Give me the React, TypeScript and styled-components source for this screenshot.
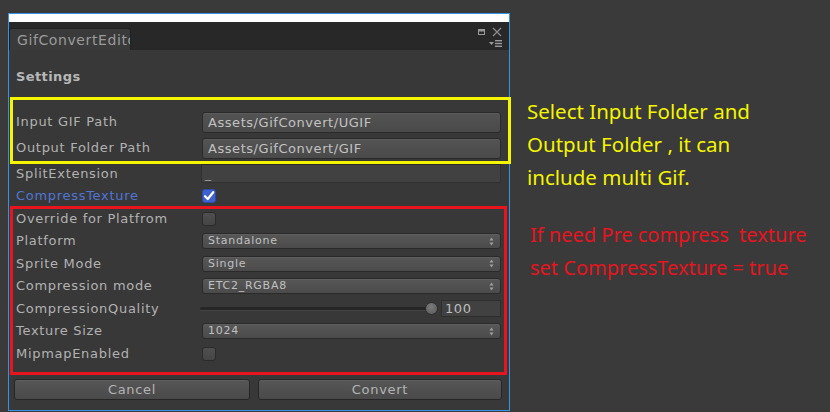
import React from "react";
import styled, { createGlobalStyle, css } from "styled-components";

const GlobalStyle = createGlobalStyle`
  html, body { margin: 0; padding: 0; background: #3a3a3a; }
  body { width: 830px; height: 412px; overflow: hidden; }
  * { box-sizing: border-box; }
`;

const Page = styled.div`
  display: flex;
  align-items: flex-start;
  height: 412px;
  padding: 13px 0 0 8px;
`;

const Window = styled.div`
  width: 502px;
  height: 398px;
  border: 1px solid #3592e6;
  background: #383838;
  display: flex;
  flex-direction: column;
`;

const TitleStrip = styled.div`
  height: 8px;
  background: #ffffff;
`;

const TabBar = styled.div`
  height: 28px;
  background: #282828;
  display: flex;
  align-items: flex-end;
`;

const Tab = styled.div`
  width: 122px;
  height: 22px;
  background: #3a3a3a;
  border: 1px solid #222;
  border-bottom: none;
  border-radius: 3px 3px 0 0;
  padding: 2px 0 0 7px;
  overflow: hidden;
  white-space: nowrap;
  font: 14px/18px "DejaVu Sans", sans-serif;
  letter-spacing: 0.6px;
  color: #9a9a9a;
`;

const WindowControls = styled.div`
  margin-left: auto;
  align-self: stretch;
  display: flex;
  flex-direction: column;
  align-items: flex-end;
  padding: 5px 7px 0 0;
  gap: 3px;
`;

const ControlRow = styled.div`
  display: flex;
  align-items: center;
  gap: 7px;
`;

const Content = styled.div`
  flex: 1;
  display: flex;
  flex-direction: column;
  padding: 19px 8px 0 7px;
`;

const Heading = styled.div`
  font: bold 13px/16px "DejaVu Sans", sans-serif;
  letter-spacing: 0.4px;
  color: #b8b8b8;
  margin-bottom: 24px;
`;

const Group = styled.div<{ $color: string; $inset: string; $after?: number }>`
  position: relative;
  display: flex;
  flex-direction: column;
  margin-bottom: ${(p) => p.$after ?? 0}px;
  &::before {
    content: "";
    position: absolute;
    inset: ${(p) => p.$inset};
    border: 3px solid ${(p) => p.$color};
    pointer-events: none;
  }
`;

const Row = styled.div<{ $h: number }>`
  display: grid;
  grid-template-columns: 186px 1fr;
  align-items: center;
  height: ${(p) => p.$h}px;
`;

const Label = styled.div<{ $accent?: boolean }>`
  font: 13px/16px "DejaVu Sans", sans-serif;
  letter-spacing: 0.7px;
  color: ${(p) => (p.$accent ? "#4f76d6" : "#b2b2b2")};
  white-space: nowrap;
`;

const PathField = styled.div`
  height: 21px;
  border: 1px solid #2a2a2a;
  border-radius: 3px;
  background: linear-gradient(#535353, #4a4a4a);
  box-shadow: inset 0 1px 0 rgba(255, 255, 255, 0.05);
  padding-left: 5px;
  font: 13px/19px "DejaVu Sans", sans-serif;
  letter-spacing: 0.55px;
  color: #c2c2c2;
`;

const TextField = styled.div`
  height: 19px;
  margin-left: -1px;
  border: 1px solid #303030;
  border-top-color: #2a2a2a;
  background: #414141;
  padding: 0 0 0 3px;
  font: 12px/19px "DejaVu Sans", sans-serif;
  color: #9c9c9c;
`;

const Dropdown = styled.div`
  height: 16px;
  border: 1px solid #2a2a2a;
  border-radius: 3px;
  background: linear-gradient(#575757, #4b4b4b);
  box-shadow: inset 0 1px 0 rgba(255, 255, 255, 0.05);
  display: flex;
  align-items: center;
  padding: 0 6px 0 5px;
  font: 11px/14px "DejaVu Sans", sans-serif;
  letter-spacing: 0.75px;
  color: #c0c0c0;
  justify-content: space-between;
`;

const Box = styled.div<{ $checked?: boolean }>`
  width: 14px;
  height: 14px;
  border-radius: 3px;
  border: 1px solid #2a2a2a;
  display: flex;
  align-items: center;
  justify-content: center;
  ${(p) =>
    p.$checked
      ? css`
          background: #3d62cf;
          border-color: #2c4aa6;
        `
      : css`
          background: linear-gradient(#4f4f4f, #454545);
        `}
`;

const SliderWrap = styled.div`
  display: flex;
  align-items: center;
  margin-left: -2px;
`;

const Track = styled.div`
  flex: 1;
  height: 3px;
  border-radius: 2px;
  background: #262626;
  box-shadow: 0 1px 0 #444;
`;

const Thumb = styled.div`
  width: 13px;
  height: 13px;
  border-radius: 50%;
  margin-left: -2px;
  background: radial-gradient(circle at 45% 35%, #7a7a7a, #5a5a5a);
  border: 1px solid #2e2e2e;
`;

const NumberField = styled.div`
  width: 60px;
  height: 17px;
  margin-left: 3px;
  border: 1px solid #2e2e2e;
  background: #414141;
  padding-left: 3px;
  font: 13px/15px "DejaVu Sans", sans-serif;
  letter-spacing: 0.6px;
  color: #bdbdbd;
`;

const ButtonRow = styled.div`
  display: grid;
  grid-template-columns: 236px 244px;
  gap: 8px;
  margin: 13.5px 0 0 -2px;
`;

const Button = styled.div`
  height: 21px;
  border: 1px solid #262626;
  border-radius: 3px;
  background: linear-gradient(#565656, #4a4a4a);
  box-shadow: inset 0 1px 0 rgba(255, 255, 255, 0.06);
  text-align: center;
  font: 13px/19px "DejaVu Sans", sans-serif;
  letter-spacing: 0.7px;
  color: #b4b4b4;
`;

const Notes = styled.div`
  display: flex;
  flex-direction: column;
  margin-left: 17px;
  padding-top: 82px;
`;

const Note = styled.div<{ $color: string; $offset: number; $shift: number; $size: number }>`
  font: ${(p) => p.$size}px/33px "Noto Sans", "Open Sans", sans-serif;
  color: ${(p) => p.$color};
  margin-top: ${(p) => p.$offset}px;
  margin-left: ${(p) => p.$shift}px;
  white-space: pre;
`;

const Arrows = () => (
  <svg width="5" height="9" viewBox="0 0 5 9">
    <path d="M2.5 0.5 L4.5 3.5 H0.5 Z" fill="#a0a0a0" />
    <path d="M2.5 8.5 L4.5 5.5 H0.5 Z" fill="#a0a0a0" />
  </svg>
);

const Check = () => (
  <svg width="12" height="12" viewBox="0 0 12 12">
    <path d="M2 6.2 L4.8 9 L10.2 2.2" stroke="#fff" strokeWidth="2.2" fill="none" strokeLinecap="round" strokeLinejoin="round" />
  </svg>
);

const MaxIcon = () => (
  <svg width="7" height="6" viewBox="0 0 7 6">
    <rect x="0.5" y="0.5" width="6" height="5" fill="none" stroke="#9a9a9a" />
    <rect x="0.5" y="0.5" width="6" height="2" fill="#9a9a9a" />
  </svg>
);

const CloseIcon = () => (
  <svg width="10" height="10" viewBox="0 0 10 10">
    <path d="M1 1 L9 9 M9 1 L1 9" stroke="#8a8a8a" strokeWidth="1.3" />
  </svg>
);

const MenuIcon = () => (
  <svg width="13" height="7" viewBox="0 0 13 7">
    <path d="M0 2 H5 L2.5 5 Z" fill="#9a9a9a" />
    <rect x="6" y="0" width="7" height="1.4" fill="#9a9a9a" />
    <rect x="6" y="2.8" width="7" height="1.4" fill="#9a9a9a" />
    <rect x="6" y="5.6" width="7" height="1.4" fill="#9a9a9a" />
  </svg>
);

const Select = ({ value }: { value: string }) => (
  <Dropdown>
    <span>{value}</span>
    <Arrows />
  </Dropdown>
);

export default function App() {
  return (
    <>
      <GlobalStyle />
      <Page>
        <Window>
          <TitleStrip />
          <TabBar>
            <Tab>GifConvertEditor</Tab>
            <WindowControls>
              <ControlRow>
                <MaxIcon />
                <CloseIcon />
              </ControlRow>
              <MenuIcon />
            </WindowControls>
          </TabBar>
          <Content>
            <Heading>Settings</Heading>
            <Group $color="#f5f500" $inset="-12px -10px -3px -6px" $after={1.5}>
              <Row $h={26}>
                <Label>Input GIF Path</Label>
                <PathField>Assets/GifConvert/UGIF</PathField>
              </Row>
              <Row $h={26}>
                <Label>Output Folder Path</Label>
                <PathField>Assets/GifConvert/GIF</PathField>
              </Row>
            </Group>
            <Row $h={22.5}>
              <Label>SplitExtension</Label>
              <TextField>_</TextField>
            </Row>
            <Row $h={22.5}>
              <Label $accent>CompressTexture</Label>
              <Box $checked>
                <Check />
              </Box>
            </Row>
            <Group $color="#e8141e" $inset="-1.5px -6px -10px -6px">
              <Row $h={22.5}>
                <Label>Override for Platfrom</Label>
                <Box />
              </Row>
              <Row $h={22.5}>
                <Label>Platform</Label>
                <Select value="Standalone" />
              </Row>
              <Row $h={22.5}>
                <Label>Sprite Mode</Label>
                <Select value="Single" />
              </Row>
              <Row $h={22.5}>
                <Label>Compression mode</Label>
                <Select value="ETC2_RGBA8" />
              </Row>
              <Row $h={22.5}>
                <Label>CompressionQuality</Label>
                <SliderWrap>
                  <Track />
                  <Thumb />
                  <NumberField>100</NumberField>
                </SliderWrap>
              </Row>
              <Row $h={22.5}>
                <Label>Texture Size</Label>
                <Select value="1024" />
              </Row>
              <Row $h={22.5}>
                <Label>MipmapEnabled</Label>
                <Box />
              </Row>
            </Group>
            <ButtonRow>
              <Button>Cancel</Button>
              <Button>Convert</Button>
            </ButtonRow>
          </Content>
        </Window>
        <Notes>
          <Note $color="#f5f500" $offset={0} $shift={0} $size={20.5}>
            {"Select Input Folder and\nOutput Folder , it can\ninclude multi Gif."}
          </Note>
          <Note $color="#e8141e" $offset={24} $shift={3} $size={20}>
            {"If need Pre compress  texture\nset CompressTexture = true"}
          </Note>
        </Notes>
      </Page>
    </>
  );
}
